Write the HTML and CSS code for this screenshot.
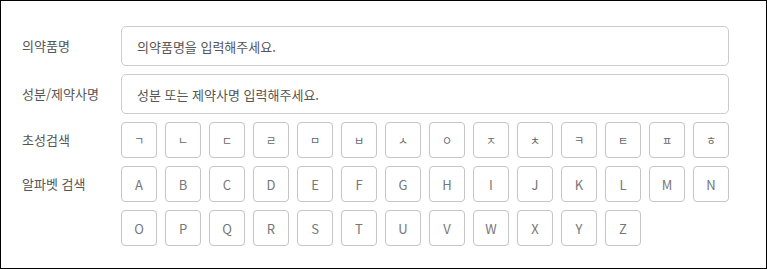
FILE: index.html
```html
<!DOCTYPE html>
<html lang="ko">
<head>
<meta charset="utf-8">
<link rel="stylesheet" href="styles.css">
</head>
<body>
<div class="panel">
  <div class="form">
    <div class="label label-input">의약품명</div>
    <input class="text-input" type="text" placeholder="의약품명을 입력해주세요.">
    <div class="label label-input">성분/제약사명</div>
    <input class="text-input" type="text" placeholder="성분 또는 제약사명 입력해주세요.">
    <div class="label label-key">초성검색</div>
    <div class="keys">
      <button class="key jamo">ㄱ</button><button class="key jamo">ㄴ</button><button class="key jamo">ㄷ</button><button class="key jamo">ㄹ</button><button class="key jamo">ㅁ</button><button class="key jamo">ㅂ</button><button class="key jamo">ㅅ</button><button class="key jamo">ㅇ</button><button class="key jamo">ㅈ</button><button class="key jamo">ㅊ</button><button class="key jamo">ㅋ</button><button class="key jamo">ㅌ</button><button class="key jamo">ㅍ</button><button class="key jamo">ㅎ</button>
    </div>
    <div class="label label-key">알파벳 검색</div>
    <div class="keys">
      <button class="key">A</button><button class="key">B</button><button class="key">C</button><button class="key">D</button><button class="key">E</button><button class="key">F</button><button class="key">G</button><button class="key">H</button><button class="key">I</button><button class="key">J</button><button class="key">K</button><button class="key">L</button><button class="key">M</button><button class="key">N</button><button class="key">O</button><button class="key">P</button><button class="key">Q</button><button class="key">R</button><button class="key">S</button><button class="key">T</button><button class="key">U</button><button class="key">V</button><button class="key">W</button><button class="key">X</button><button class="key">Y</button><button class="key">Z</button>
    </div>
  </div>
</div>
</body>
</html>
```
FILE: styles.css
```css
html, body {
  margin: 0;
  padding: 0;
  background: #fff;
}
.panel {
  box-sizing: border-box;
  width: 767px;
  height: 269px;
  border: 1px solid #000;
  padding: 25px 0 0 21px;
  font-family: "Noto Sans CJK KR", "Noto Sans", sans-serif;
}
.form {
  display: grid;
  grid-template-columns: 99px 608px;
  row-gap: 8px;
  align-items: start;
}
.label {
  display: flex;
  align-items: center;
  font-size: 13px;
  color: #555;
  margin-top: -1px;
}
.label-input { height: 40px; }
.label-key { height: 36px; }
.text-input {
  box-sizing: border-box;
  width: 608px;
  height: 40px;
  margin: 0;
  border: 1px solid #ccc;
  border-radius: 5px;
  padding: 0 15px;
  font-family: inherit;
  font-size: 13px;
  color: #333;
  outline: none;
  background: #fff;
}
.text-input::placeholder {
  color: #555;
  opacity: 1;
}
.keys {
  display: grid;
  grid-template-columns: repeat(14, 36px);
  gap: 8px;
}
.key {
  box-sizing: border-box;
  width: 36px;
  height: 36px;
  margin: 0;
  padding: 0;
  border: 1px solid #c4c4cc;
  border-radius: 4px;
  background: #fff;
  font-family: inherit;
  font-size: 13px;
  color: #777;
  display: flex;
  align-items: center;
  justify-content: center;
}
.key.jamo {
  font-size: 11px;
  color: #666;
}
```
